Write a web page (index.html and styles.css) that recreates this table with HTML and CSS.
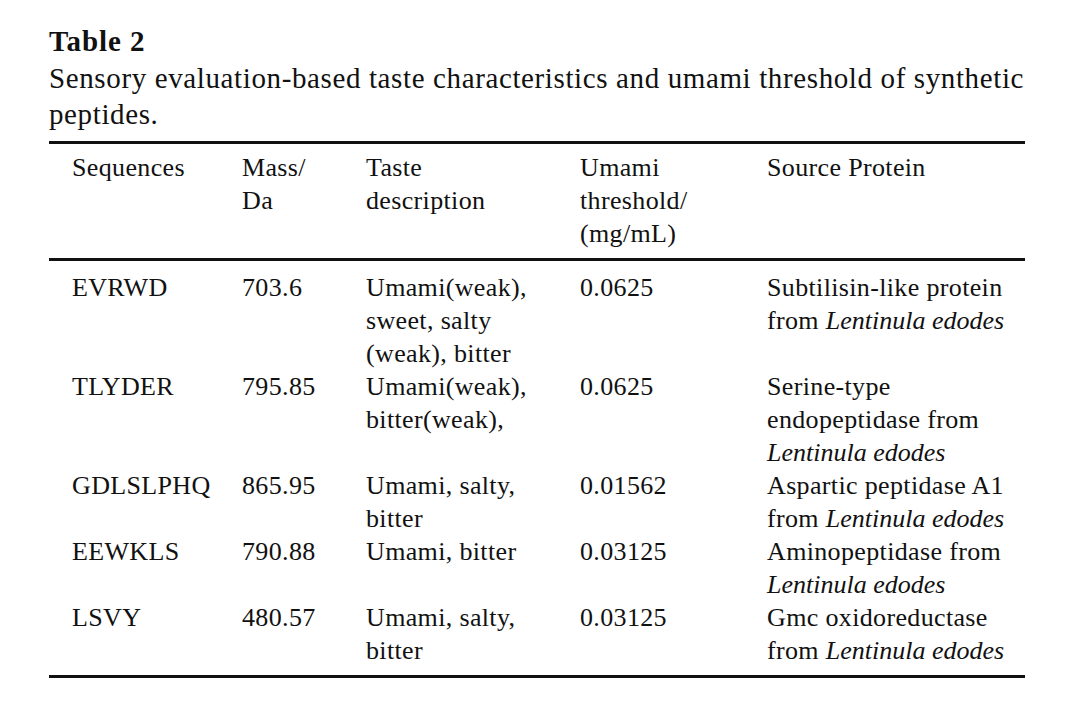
FILE: index.html
```html
<!DOCTYPE html>
<html lang="en">
<head>
<meta charset="utf-8">
<title>Table 2</title>
<link rel="stylesheet" href="styles.css">
</head>
<body>
<div class="page">
  <div class="title">Table 2</div>
  <div class="caption">Sensory evaluation-based taste characteristics and umami threshold of synthetic<br>peptides.</div>
  <table class="tbl">
    <colgroup>
      <col class="c1"><col class="c2"><col class="c3"><col class="c4"><col class="c5">
    </colgroup>
    <thead>
      <tr>
        <th>Sequences</th>
        <th>Mass/<br>Da</th>
        <th>Taste<br>description</th>
        <th>Umami<br>threshold/<br>(mg/mL)</th>
        <th>Source Protein</th>
      </tr>
    </thead>
    <tbody>
      <tr>
        <td>EVRWD</td>
        <td>703.6</td>
        <td>Umami(weak),<br>sweet, salty<br>(weak), bitter</td>
        <td>0.0625</td>
        <td>Subtilisin-like protein<br>from <i>Lentinula edodes</i></td>
      </tr>
      <tr>
        <td>TLYDER</td>
        <td>795.85</td>
        <td>Umami(weak),<br>bitter(weak),</td>
        <td>0.0625</td>
        <td>Serine-type<br>endopeptidase from<br><i>Lentinula edodes</i></td>
      </tr>
      <tr>
        <td>GDLSLPHQ</td>
        <td>865.95</td>
        <td>Umami, salty,<br>bitter</td>
        <td>0.01562</td>
        <td>Aspartic peptidase A1<br>from <i>Lentinula edodes</i></td>
      </tr>
      <tr>
        <td>EEWKLS</td>
        <td>790.88</td>
        <td>Umami, bitter</td>
        <td>0.03125</td>
        <td>Aminopeptidase from<br><i>Lentinula edodes</i></td>
      </tr>
      <tr>
        <td>LSVY</td>
        <td>480.57</td>
        <td>Umami, salty,<br>bitter</td>
        <td>0.03125</td>
        <td>Gmc oxidoreductase<br>from <i>Lentinula edodes</i></td>
      </tr>
    </tbody>
  </table>
</div>
</body>
</html>
```

FILE: styles.css
```css
html, body {
  margin: 0;
  padding: 0;
  background: #ffffff;
}
body {
  font-family: "Liberation Serif", "Times New Roman", serif;
  color: #111111;
}
.page {
  padding: 23px 0 0 49px;
}
.title {
  font-weight: bold;
  font-size: 29px;
  line-height: 36.5px;
  letter-spacing: 0.9px;
  white-space: nowrap;
}
.caption {
  font-size: 29px;
  line-height: 36.5px;
  letter-spacing: 0.62px;
  white-space: nowrap;
}
.tbl {
  margin-top: 8px;
  width: 976px;
  table-layout: fixed;
  border-collapse: collapse;
  border-top: 3px solid #111;
  border-bottom: 3px solid #111;
  font-size: 26px;
  line-height: 33px;
  letter-spacing: 0.35px;
}
.c1 { width: 193px; }
.c2 { width: 124px; }
.c3 { width: 214px; }
.c4 { width: 187px; }
.c5 { width: 258px; }
.tbl th, .tbl td {
  text-align: left;
  vertical-align: top;
  font-weight: normal;
  padding: 0;
  white-space: nowrap;
}
.tbl th:first-child, .tbl td:first-child {
  padding-left: 23px;
}
.tbl thead tr {
  border-bottom: 3px solid #111;
}
.tbl th {
  padding-top: 7px;
  padding-bottom: 8px;
}
.tbl tbody tr:first-child td {
  padding-top: 10px;
}
.tbl tbody tr:last-child td {
  padding-bottom: 8px;
}
.tbl i {
  font-style: italic;
  letter-spacing: 0;
}
```
